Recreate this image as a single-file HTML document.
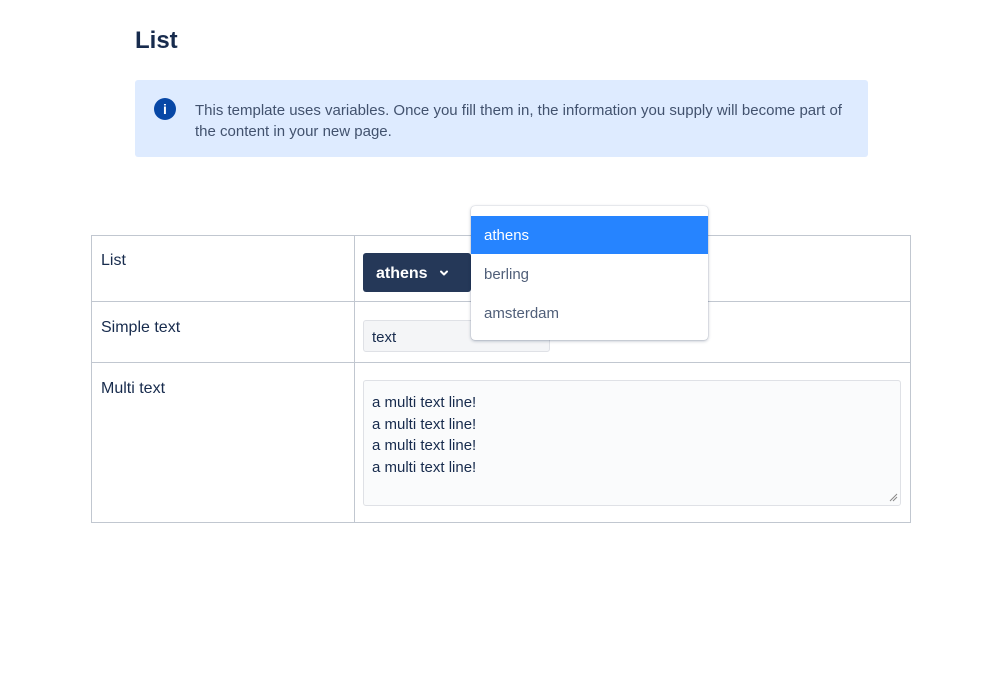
<!DOCTYPE html>
<html><head><style>
body{margin:0;width:999px;height:680px;background:#fff;font-family:"Liberation Sans",sans-serif;color:#172b4d;position:relative;overflow:hidden}
.a{position:absolute}
</style></head><body>
<div class="a" style="left:135px;top:27px;font-size:24px;font-weight:bold;color:#172b4d">List</div>
<div class="a" style="left:135px;top:80px;width:733px;height:77px;background:#deebff;border-radius:3px"></div>
<div class="a" style="left:154px;top:98px;width:22px;height:22px;border-radius:50%;background:#0747a6;color:#fff;font-size:14px;font-weight:bold;text-align:center;line-height:22px">i</div>
<div class="a" style="left:195px;top:100px;width:660px;font-size:15px;line-height:21px;color:#42526e">This template uses variables. Once you fill them in, the information you supply will become part of the content in your new page.</div>

<div class="a" style="left:91px;top:235px;width:818px;height:286px;border:1px solid #c1c7d0"></div>
<div class="a" style="left:354px;top:235px;width:1px;height:288px;background:#c1c7d0"></div>
<div class="a" style="left:91px;top:301px;width:820px;height:1px;background:#c1c7d0"></div>
<div class="a" style="left:91px;top:362px;width:820px;height:1px;background:#c1c7d0"></div>
<div class="a" style="left:101px;top:252px;font-size:16px;color:#172b4d">List</div>
<div class="a" style="left:101px;top:319px;font-size:16px;color:#172b4d">Simple text</div>
<div class="a" style="left:101px;top:380px;font-size:16px;color:#172b4d">Multi text</div>

<div class="a" style="left:363px;top:253px;width:108px;height:39px;background:#253858;border-radius:3px;color:#fff;font-weight:bold;font-size:16px;line-height:41px;padding-left:13px;box-sizing:border-box">athens</div>
<svg class="a" style="left:439px;top:269px" width="10" height="8" viewBox="0 0 10 8"><path d="M2 2.5L5 5.5L8 2.5" stroke="#fff" stroke-width="2" fill="none" stroke-linecap="round" stroke-linejoin="round"/></svg>
<div class="a" style="left:363px;top:320px;width:187px;height:32px;border:1px solid #dfe1e6;background:#f4f5f7;border-radius:3px;font-size:15px;line-height:33px;padding-left:8px;box-sizing:border-box">text</div>
<div class="a" style="left:363px;top:380px;width:538px;height:126px;border:1px solid #dfe1e6;background:#fafbfc;border-radius:3px;font-size:15px;line-height:21.5px;padding:11px 8px;box-sizing:border-box">a multi text line!<br>a multi text line!<br>a multi text line!<br>a multi text line!</div>
<svg class="a" style="left:889px;top:493px" width="9" height="9"><path d="M1 8L8 1M4 8L8 4" stroke="#888" stroke-width="1"/></svg>

<div class="a" style="left:471px;top:206px;width:237px;height:134px;background:#fff;border-radius:4px;box-shadow:0 1px 3px rgba(9,30,66,.3),0 0 1px rgba(9,30,66,.3)"></div>
<div class="a" style="left:471px;top:216px;width:237px;height:38px;background:#2684ff;color:#fff;font-size:15px;line-height:40px;padding-left:13px;box-sizing:border-box">athens</div>
<div class="a" style="left:484px;top:266px;font-size:15px;color:#505f79">berling</div>
<div class="a" style="left:484px;top:305px;font-size:15px;color:#505f79">amsterdam</div>
</body></html>
